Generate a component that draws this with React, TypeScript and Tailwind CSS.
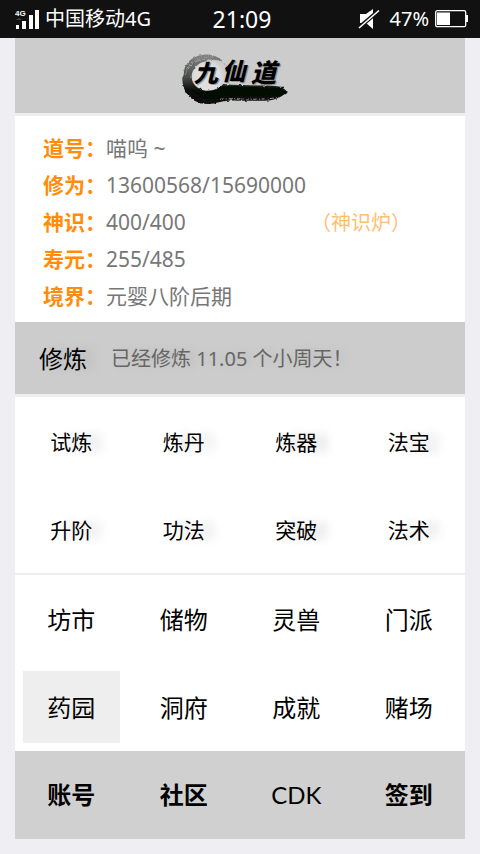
import React from "react";

type Item = { label: string; active?: boolean };

const stats = [
  { label: "道号：", value: "喵呜 ~" },
  { label: "修为：", value: "13600568/15690000" },
  { label: "神识：", value: "400/400", link: "（神识炉）" },
  { label: "寿元：", value: "255/485" },
  { label: "境界：", value: "元婴八阶后期" },
];

const skills = ["试炼", "炼丹", "炼器", "法宝", "升阶", "功法", "突破", "法术"];

const places: Item[] = [
  { label: "坊市" },
  { label: "储物" },
  { label: "灵兽" },
  { label: "门派" },
  { label: "药园", active: true },
  { label: "洞府" },
  { label: "成就" },
  { label: "赌场" },
];

const SignalIcon = () => (
  <svg width="26" height="22" viewBox="0 0 26 22" fill="#fff" aria-hidden="true">
    <text x="0" y="8" fontSize="8" fontWeight="700" fontFamily="Liberation Sans, sans-serif">
      4G
    </text>
    <rect x="1" y="17" width="3" height="4" />
    <rect x="7" y="13" width="4" height="8" />
    <rect x="14" y="7" width="4" height="14" />
    <rect x="20" y="2" width="4" height="19" />
    <path d="M1 12l3-2 3 2z" fill="#444" />
  </svg>
);

const MuteIcon = () => (
  <svg width="22" height="22" viewBox="0 0 22 22" aria-hidden="true">
    <path d="M2 6h6l7-5v20l-7-6H2z" fill="#fff" />
    <path d="M0 20.500L21 2.500" stroke="#111" strokeWidth="4" />
    <path d="M1 20L21 2.500" stroke="#fff" strokeWidth="1.600" />
  </svg>
);

const BatteryIcon = () => (
  <svg width="34" height="18" viewBox="0 0 34 18" aria-hidden="true">
    <rect x="0.7" y="0.7" width="30" height="16" rx="1.5" fill="none" stroke="#fff" strokeWidth="1.3" />
    <rect x="2" y="2.5" width="13" height="12.5" fill="#fff" />
    <rect x="31" y="5" width="2" height="7" fill="#fff" />
  </svg>
);

const Logo = () => (
  <svg width="120" height="70" viewBox="30 -13 360 210" role="img" aria-label="九仙道">
    <defs>
      <filter id="ink" x="-10%" y="-10%" width="120%" height="120%">
        <feTurbulence type="fractalNoise" baseFrequency="0.09" numOctaves="3" seed="4" result="n" />
        <feDisplacementMap in="SourceGraphic" in2="n" scale="8" xChannelSelector="R" yChannelSelector="G" />
      </filter>
      <linearGradient id="fade" x1="0" y1="0" x2="0" y2="1">
        <stop offset="0" stopColor="#858585" />
        <stop offset="0.45" stopColor="#4b4d4b" />
        <stop offset="0.72" stopColor="#0a0d0a" />
      </linearGradient>
      <radialGradient id="glow">
        <stop offset="0.7" stopColor="#dedede" />
        <stop offset="1" stopColor="#ccc" />
      </radialGradient>
    </defs>
    <circle cx="112" cy="94" r="54" fill="url(#glow)" />
    <g filter="url(#ink)">
      <path
        d="M158 48C138 24 96 20 66 40C38 60 28 104 46 138C64 170 100 184 140 172C180 160 220 168 262 166C296 168 318 162 332 154L354 140L334 124C290 118 220 122 160 116C142 136 110 142 88 130C62 116 58 86 76 66C94 44 130 40 158 48Z"
        fill="url(#fade)"
      />
      <path
        d="M50 70C62 46 92 30 128 36M46 92C52 66 68 50 92 42M60 62C76 44 100 38 140 44"
        stroke="#b5b5b5"
        strokeWidth="2"
        strokeDasharray="9 4 3 5"
        fill="none"
      />
      <path d="M146 44l18 12l6 10" stroke="#777" strokeWidth="2" strokeDasharray="5 4" fill="none" />
      <path d="M150 162c50-6 110 6 176-6" stroke="#999" strokeWidth="3" strokeDasharray="12 5 4 4" fill="none" />
      <path d="M62 130C96 152 136 136 164 122L332 128L350 140L326 152L160 152C124 170 84 162 62 130Z" fill="#050805" />
    </g>
    <g fontFamily="Noto Sans CJK SC, sans-serif" fontWeight="900" fontStyle="italic">
      <g fill="#999">
        <text x="75" y="112" fontSize="72">九</text>
        <text x="159" y="107" fontSize="72">仙</text>
        <text x="247" y="112" fontSize="76">道</text>
      </g>
      <g fill="#000">
        <text x="71" y="109" fontSize="72">九</text>
        <text x="155" y="104" fontSize="72">仙</text>
        <text x="243" y="109" fontSize="76">道</text>
      </g>
    </g>
  </svg>
);

const StatusBar = () => (
  <div className="grid h-[38px] grid-cols-[1fr_auto_1fr] items-center bg-[#111] pl-[15px] pr-[11px] text-white">
    <div className="flex items-center gap-1 text-[20px]">
      <SignalIcon />
      <span>中国移动4G</span>
    </div>
    <span className="text-[23px]">21:09</span>
    <div className="flex items-center justify-end gap-[6px] text-[20px]">
      <MuteIcon />
      <span className="pl-1">47%</span>
      <BatteryIcon />
    </div>
  </div>
);

const App = () => {
  return (
    <div className="min-h-screen bg-[#eeeef3] font-['Noto_Sans','Noto_Sans_CJK_SC',sans-serif] leading-none text-black">
      <StatusBar />

      <main className="mx-[15px] bg-[#eee]">
        <header className="flex h-[75px] items-center justify-center bg-[#ccc]">
          <Logo />
        </header>

        <dl className="mt-[3px] bg-white pt-[14px] pb-[7px] pl-7 text-[21px] text-[#777]">
          {stats.map((s) => (
            <div key={s.label} className="flex h-[37px] items-center">
              <dt className="w-[63px] font-bold text-[#ff8c0a]">{s.label}</dt>
              <dd className="flex-1">{s.value}</dd>
              {s.link && (
                <dd className="pr-[54px] text-[20px]">
                  <a href="#" className="text-[#ffbe70]">{s.link}</a>
                </dd>
              )}
            </div>
          ))}
        </dl>

        <section className="flex h-[72px] items-center gap-6 bg-[#ccc] pl-6">
          <button className="pt-[2px] text-[24px] [text-shadow:10px_0_8px_#bbb]">修炼</button>
          <p className="pt-[2px] text-[20px] text-[#666] [text-shadow:6px_0_8px_#bbb]">
            已经修炼 11.05 个小周天！
          </p>
        </section>

        <section className="mt-[3px] grid grid-cols-4 bg-white">
          {skills.map((name) => (
            <button key={name} className="h-[88px] pt-[2px] text-[21px] [text-shadow:12px_0_10px_#ddd]">
              {name}
            </button>
          ))}
        </section>

        <section className="mt-[2px] grid grid-cols-4 bg-white">
          {places.map((p) => (
            <button
              key={p.label}
              className={`m-2 h-[72px] pt-[2px] text-[24px] ${p.active ? "bg-[#eee]" : ""}`}>
              {p.label}
            </button>
          ))}
        </section>

        <nav className="grid grid-cols-4 bg-[#d0d0d0] text-center text-[24px] font-bold">
          <a href="#" className="leading-[88px]">账号</a>
          <a href="#" className="leading-[88px]">社区</a>
          <a href="#" className="font-['Lato',sans-serif] font-normal leading-[88px]">CDK</a>
          <a href="#" className="leading-[88px]">签到</a>
        </nav>
      </main>
    </div>
  );
};

export default App;
